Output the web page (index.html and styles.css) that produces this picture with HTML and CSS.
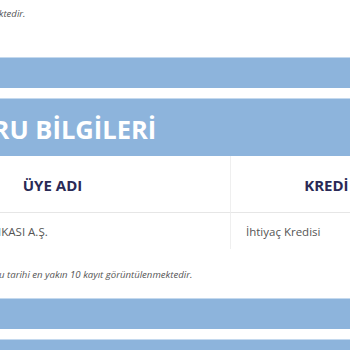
FILE: index.html
```html
<!DOCTYPE html>
<html lang="tr">
<head>
<meta charset="utf-8">
<link rel="stylesheet" href="styles.css">
</head>
<body>
<div class="page">
  <p class="note note-top">Son 10 kayıt görüntülenmektedir.</p>
  <div class="band"></div>
  <div class="band band-title"><h2 class="title">KREDİ BAŞVURU BİLGİLERİ</h2></div>
  <div class="table">
    <div class="cell head">ÜYE ADI</div>
    <div class="cell head col2">KREDİ TÜRÜ</div>
    <div class="cell head col3">TARİH</div>
    <div class="cell body">TÜRKİYE EMLAK BANKASI A.Ş.</div>
    <div class="cell body col2">İhtiyaç Kredisi</div>
    <div class="cell body col3">01.01.2020</div>
  </div>
  <p class="note note-bottom">Başvuru tarihi en yakın 10 kayıt görüntülenmektedir.</p>
  <div class="band"></div>
  <div class="band"></div>
</div>
</body>
</html>
```
FILE: styles.css
```css
html, body {
  margin: 0;
  padding: 0;
  background: #ffffff;
  overflow: hidden;
}
.page {
  margin-left: -200px;
  width: 900px;
  font-family: "Open Sans", "DejaVu Sans", sans-serif;
}
.note {
  margin: 0;
  font-size: 9.6px;
  line-height: 16px;
  font-style: italic;
  color: #555555;
}
.note-top {
  padding-top: 6px;
  margin-bottom: 35px;
  padding-left: 85px;
}
.band {
  background: #8db4dc;
  border-top: 1px solid #c4d9ee;
  height: 30px;
  margin-bottom: 10px;
}
.band-title {
  height: 57px;
  margin-bottom: 0;
  display: flex;
  align-items: center;
}
.title {
  margin: 0;
  padding-left: 26px;
  padding-top: 3px;
  font-size: 25.5px;
  font-weight: 700;
  color: #ffffff;
  line-height: 30px;
}
.table {
  margin-left: 75px;
  display: grid;
  grid-template-columns: 355px 237px 200px;
}
.cell {
  display: flex;
  align-items: center;
}
.head {
  height: 57px;
  border-bottom: 1px solid #e6e6e6;
  justify-content: center;
  font-size: 15px;
  font-weight: 700;
  color: #2a2a56;
  padding-top: 2px;
  box-sizing: border-box;
}
.body {
  height: 36px;
  padding-left: 15px;
  font-size: 11.5px;
  color: #555555;
}
.col2 {
  border-left: 1px solid #efefef;
}
.col3 {
  border-left: 1px solid #efefef;
}
.note-bottom {
  margin-top: 18px;
  padding-left: 170px;
  margin-bottom: 15px;
}
```
